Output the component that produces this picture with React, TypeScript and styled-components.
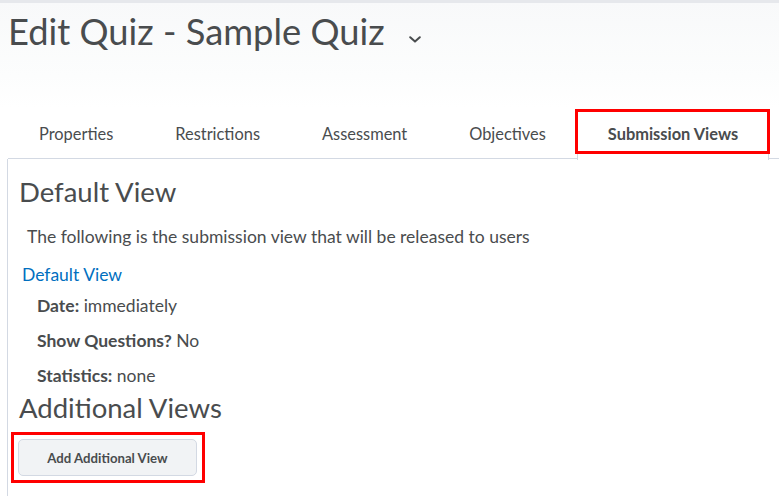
import React from 'react';
import styled, { createGlobalStyle } from 'styled-components';

const TABS = ['Properties', 'Restrictions', 'Assessment', 'Objectives', 'Submission Views'];
const ACTIVE_TAB = 'Submission Views';

/** 제출 보기 설정 항목 */
const DEFAULT_VIEW_ITEMS = [
  { label: 'Date:', value: 'immediately' },
  { label: 'Show Questions?', value: 'No' },
  { label: 'Statistics:', value: 'none' },
];

const GlobalStyle = createGlobalStyle`
  body {
    margin: 0;
    background: #ffffff;
    font-family: Lato, 'Open Sans', sans-serif;
    color: #494c4e;
  }
`;

export default function App() {
  return (
    <React.Fragment>
      <GlobalStyle />
      <Page>
        {/* 상단 제목 */}
        <Header>
          <Title>
            Edit Quiz - Sample Quiz
            <Chevron viewBox="0 0 12 7" aria-hidden="true">
              <path d="M1.2 1.2 L6 5.6 L10.8 1.2" />
            </Chevron>
          </Title>
        </Header>

        {/* 탭 목록 */}
        <TabBar>
          {TABS.map(tab => {
            const active = tab === ACTIVE_TAB;
            return (
              <Tab key={tab} $active={active}>
                {tab}
                {active && <Marker />}
              </Tab>
            );
          })}
          <TabFiller />
        </TabBar>

        {/* 탭 내용 */}
        <Panel>
          <SectionTitle>Default View</SectionTitle>
          <Description>The following is the submission view that will be released to users</Description>
          <ViewLink href="#">Default View</ViewLink>
          <ItemList>
            {DEFAULT_VIEW_ITEMS.map(item => (
              <Item key={item.label}>
                <b>{item.label}</b> {item.value}
              </Item>
            ))}
          </ItemList>
          <SectionTitle $tight>Additional Views</SectionTitle>
          <Highlight>
            <Button type="button">Add Additional View</Button>
          </Highlight>
        </Panel>
      </Page>
    </React.Fragment>
  );
}

const Page = styled.div`
  width: 779px;
  height: 496px;
  overflow: hidden;
  display: flex;
  flex-direction: column;
`;

const Header = styled.header`
  height: 105px;
  border-top: 3px solid #e6e8ec;
  background: linear-gradient(#f8f9fa, #fcfdfd 70%, #ffffff);
`;

const Title = styled.h1`
  margin: 6px 0 0 8px;
  display: flex;
  align-items: center;
  font-size: 36.3px;
  line-height: 44px;
  font-weight: 400;
  color: #494c4e;
`;

const Chevron = styled.svg`
  width: 12px;
  height: 7px;
  margin: 16px 0 0 24px;
  fill: none;
  stroke: #494c4e;
  stroke-width: 2;
  stroke-linecap: round;
  stroke-linejoin: round;
`;

const TabBar = styled.nav`
  display: flex;
  margin-left: 8px;
`;

const Tab = styled.div<{ $active?: boolean }>`
  position: relative;
  padding: 16px 31px 14px;
  font-size: 16.4px;
  line-height: 20px;
  white-space: nowrap;
  font-weight: ${p => (p.$active ? 700 : 400)};
  color: #494c4e;
  background: #ffffff;
  border-bottom: 1px solid ${p => (p.$active ? 'transparent' : '#d3d9e3')};

  /* 선택된 탭 양쪽 눈금 */
  ${p =>
    p.$active &&
    `
    &::before,
    &::after {
      content: '';
      position: absolute;
      bottom: -2px;
      width: 1px;
      height: 6px;
      background: #d3d9e3;
    }
    &::before { left: 0; }
    &::after { right: 0; }
  `}
`;

/* 빨간 강조 표시 */
const Marker = styled.span`
  position: absolute;
  top: 1px;
  left: -2px;
  right: -1px;
  bottom: 4px;
  border: 3px solid #ff0000;
  pointer-events: none;
`;

const TabFiller = styled.div`
  flex: 1;
  border-bottom: 1px solid #d3d9e3;
`;

const Panel = styled.main`
  flex: 1;
  margin-left: 7px;
  padding: 16px 0 0 11px;
  border-left: 1px solid #d3d9e3;
`;

const SectionTitle = styled.h2<{ $tight?: boolean }>`
  margin: ${p => (p.$tight ? '3px' : '0')} 0 0;
  font-size: 27.5px;
  line-height: 34px;
  font-weight: 400;
  color: #494c4e;
`;

const Description = styled.p`
  margin: 16px 0 0 8px;
  font-size: 17.5px;
  line-height: 24px;
`;

const ViewLink = styled.a`
  display: inline-block;
  margin: 14px 0 0 3px;
  font-size: 17.5px;
  line-height: 24px;
  color: #006fbf;
  text-decoration: none;
`;

const ItemList = styled.ul`
  list-style: none;
  margin: 7px 0 0 18px;
  padding: 0;
  display: flex;
  flex-direction: column;
  gap: 11px;
`;

const Item = styled.li`
  font-size: 17.5px;
  line-height: 24px;

  b {
    font-weight: 700;
  }
`;

const Highlight = styled.div`
  display: inline-flex;
  align-self: flex-start;
  margin: 7px 0 0 -8px;
  padding: 4px 5px 4px 4px;
  border: 3px solid #ff0000;
`;

const Button = styled.button`
  width: 179px;
  height: 37px;
  padding: 0;
  border: 1px solid #d3d9e3;
  border-radius: 5px;
  background: #f1f3f5;
  font-family: Lato, 'Open Sans', sans-serif;
  font-size: 13.2px;
  font-weight: 700;
  color: #494c4e;
`;
